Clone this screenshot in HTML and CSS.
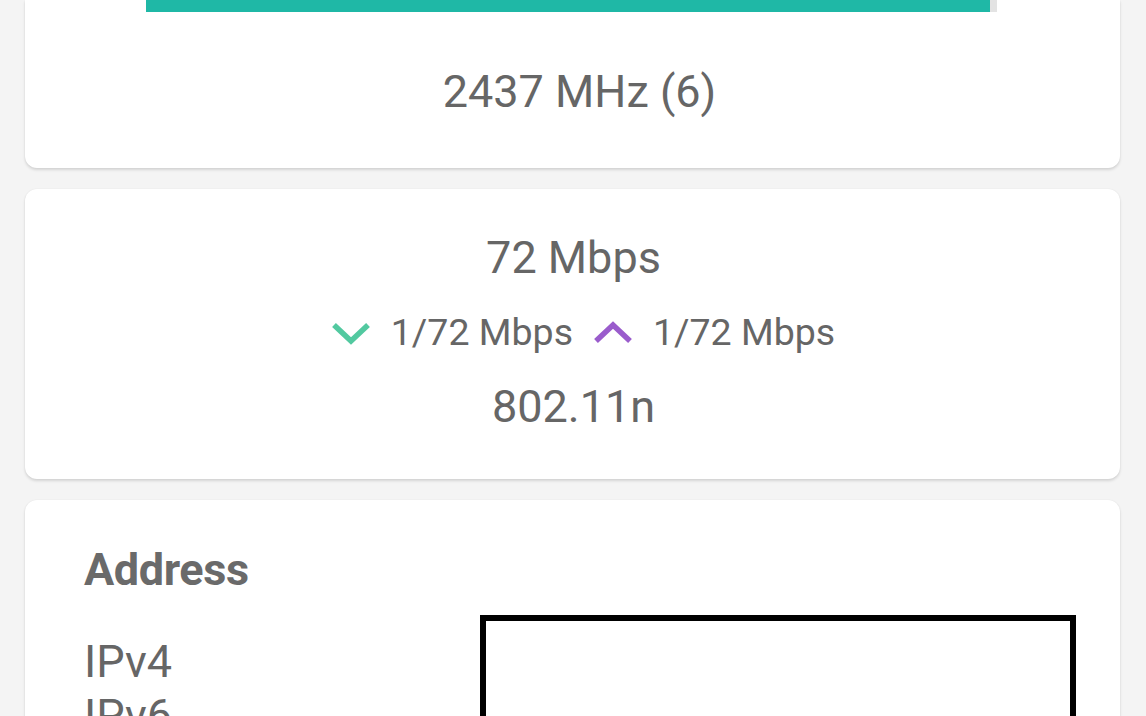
FILE: index.html
```html
<!DOCTYPE html>
<html>
<head>
<meta charset="utf-8">
<link rel="stylesheet" href="styles.css">
</head>
<body>
<div class="page">
  <section class="card card-freq">
    <div class="track"><div class="fill" style="width:99.2%"></div></div>
    <div class="big">2437 MHz (6)</div>
  </section>
  <section class="card card-speed">
    <div class="big">72 Mbps</div>
    <div class="rates">
      <svg class="chev" width="38" height="24" viewBox="0 0 38 24"><polyline points="2,4 19,20 36,4" fill="none" stroke="#52c9a0" stroke-width="5.5"/></svg>
      <span>1/72 Mbps</span>
      <svg class="chev" width="38" height="24" viewBox="0 0 38 24"><polyline points="2,20 19,4 36,20" fill="none" stroke="#9a5ccc" stroke-width="5.5"/></svg>
      <span>1/72 Mbps</span>
    </div>
    <div class="big std">802.11n</div>
  </section>
  <section class="card card-addr">
    <h2 class="title">Address</h2>
    <div class="addr-grid">
      <div class="labels">
        <div>IPv4</div>
        <div>IPv6</div>
      </div>
      <div class="box"></div>
    </div>
  </section>
</div>
</body>
</html>
```
FILE: styles.css
```css
html, body {
  margin: 0;
  padding: 0;
}
body {
  background: #f4f4f4;
  font-family: Roboto, "Noto Sans", sans-serif;
  color: #666;
  width: 1146px;
  height: 716px;
  overflow: hidden;
}
.page {
  display: flex;
  flex-direction: column;
  gap: 21px;
  padding: 0 26px 0 25px;
}
.card {
  background: #fff;
  border-radius: 12px;
  box-shadow: 0 2px 3px rgba(0,0,0,0.13), 0 0 2px rgba(0,0,0,0.06);
}
.card-freq {
  border-radius: 0 0 12px 12px;
  height: 168px;
  display: flex;
  flex-direction: column;
  align-items: center;
}
.track {
  width: 851px;
  height: 12px;
  background: #e3e3e3;
  margin-left: -3px;
}
.fill {
  height: 100%;
  background: #1fb8a6;
}
.big {
  font-size: 45px;
  line-height: 54px;
  text-align: center;
}
.card-freq .big {
  margin-top: 53px;
  margin-left: 14px;
}
.card-speed {
  height: 290px;
  box-sizing: border-box;
  padding-top: 42px;
  display: flex;
  flex-direction: column;
  align-items: center;
}
.card-speed .big {
  margin-left: 2px;
}
.rates {
  display: flex;
  align-items: center;
  gap: 21px;
  font-size: 37.5px;
  line-height: 44px;
  margin-top: 25px;
  margin-left: 22px;
}
.chev {
  display: block;
  margin-top: 2px;
}
.std {
  margin-top: 26px;
}
.card-addr {
  height: 400px;
  padding: 43px 44px 0 59px;
}
.title {
  margin: 0;
  font-size: 45px;
  line-height: 54px;
  font-weight: 700;
  color: #6a6a6a;
  letter-spacing: -0.4px;
}
.addr-grid {
  display: grid;
  grid-template-columns: 396px 1fr;
  margin-top: 18px;
}
.labels {
  padding-top: 20px;
  font-size: 45px;
  line-height: 54px;
}
.box {
  height: 260px;
  border: 6px solid #000;
  background: #fff;
}
```
